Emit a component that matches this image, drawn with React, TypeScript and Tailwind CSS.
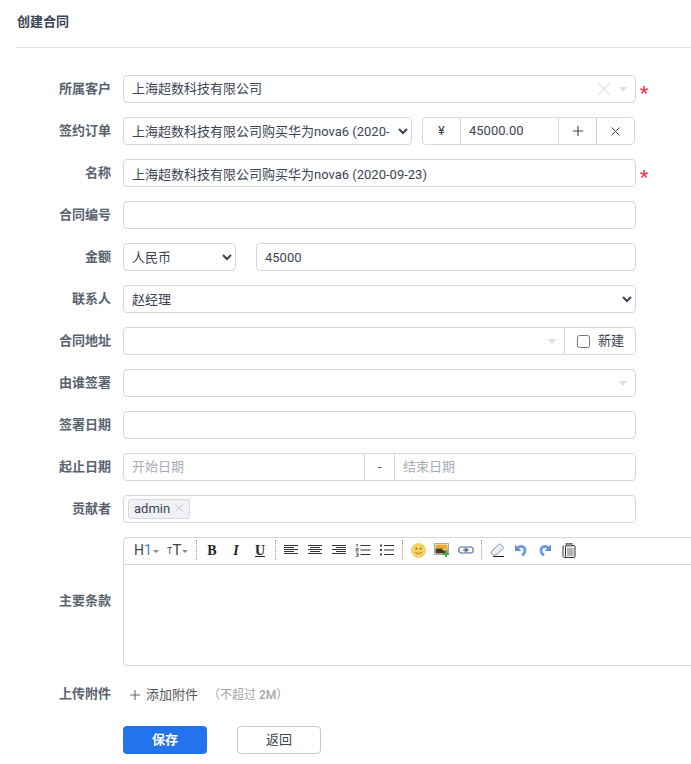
import React from 'react';

const inputCls =
  'h-7 border border-[#d5d8e3] rounded-[4px] bg-white px-2 text-[13px] text-[#3c4353] outline-none';

const Row = ({ label, children, star }: { label: string; children?: React.ReactNode; star?: boolean }) => (
  <div className="flex items-center h-7 mb-[14px]">
    <label className="w-[111px] shrink-0 text-right text-[13px] font-bold text-[#5a6270] leading-none -mt-[2px]">{label}</label>
    <div className="w-[513px] ml-3 shrink-0 flex h-7">{children}</div>
    {star && <span className="ml-1 text-[#f5365c] text-[18px] font-bold leading-none mt-[7px]">*</span>}
  </div>
);

const Caret = () => <span className="w-0 h-0 border-x-[4px] border-x-transparent border-t-[5px] border-t-[#dcdfe6]" />;

const Btn = ({ children }: { children: React.ReactNode }) => (
  <span className="w-6 h-[20px] shrink-0 flex items-center justify-center">{children}</span>
);
const Sep = () => (
  <span className="w-[7px] h-[20px] shrink-0 flex justify-center">
    <span className="h-full border-l border-dotted border-[#999]" />
  </span>
);
const Tiny = () => <span className="w-0 h-0 ml-[1px] mt-[2px] border-x-[3px] border-x-transparent border-t-[3px] border-t-[#888]" />;

const Lines = ({ xs }: { xs: [number, number][] }) => (
  <svg width="14" height="12" viewBox="0 0 14 12" shapeRendering="crispEdges">
    {xs.map(([a, b], i) => (
      <rect key={i} x={a} y={1 + i * 2} width={b - a} height="1" fill="#333" />
    ))}
  </svg>
);

const NumList = () => (
  <svg width="16" height="14" viewBox="0 0 16 14">
    <path d="M5.5 2.5h10M5.5 7h10M5.5 11.5h10" stroke="#333" />
    <path d="M1 2.2 2.2 1v3M.8 5.6h2.4v1.2H1v1.2h2.4M.8 10h2.4v3.4H.8M1.5 11.6h1.6" stroke="#444" strokeWidth=".8" fill="none" />
  </svg>
);
const BulList = () => (
  <svg width="16" height="14" viewBox="0 0 16 14">
    <path d="M5 2.5h10M5 7h10M5 11.5h10" stroke="#333" />
    <rect x="1" y="1.5" width="2" height="2" fill="#444" />
    <rect x="1" y="6" width="2" height="2" fill="#444" />
    <rect x="1" y="10.5" width="2" height="2" fill="#444" />
  </svg>
);
const Smile = () => (
  <svg width="15" height="15" viewBox="0 0 15 15">
    <circle cx="7.5" cy="7.5" r="7" fill="#f7d35e" stroke="#e8bf6a" strokeWidth=".8" />
    <circle cx="5.3" cy="5.6" r=".9" fill="#7a5a10" />
    <circle cx="9.7" cy="5.6" r=".9" fill="#7a5a10" />
    <path d="M4 8.8c1.6 2.2 5.4 2.2 7 0" stroke="#8a6414" strokeWidth=".9" fill="none" />
  </svg>
);
const Pic = () => (
  <svg width="16" height="15" viewBox="0 0 16 15">
    <rect x=".5" y=".5" width="14" height="11" fill="#fff" stroke="#aaa" />
    <rect x="1.5" y="1.5" width="12" height="4" fill="#f0a92e" />
    <rect x="1.5" y="5.5" width="12" height="5" fill="#4a3a1e" />
    <path d="M8 5.5h5.5v2H9z" fill="#f7d35e" />
    <path d="M12 8v6M9 11h6" stroke="#3fae49" strokeWidth="2" />
  </svg>
);
const LinkIcon = () => (
  <svg width="16" height="10" viewBox="0 0 16 10" fill="none">
    <rect x=".8" y="2" width="8" height="6" rx="3" stroke="#8496b8" strokeWidth="1.6" />
    <rect x="7.2" y="2" width="8" height="6" rx="3" stroke="#8496b8" strokeWidth="1.6" />
    <path d="M5 5h6" stroke="#555" />
  </svg>
);
const Eraser = () => (
  <svg width="15" height="14" viewBox="0 0 15 14">
    <path d="M1 9 8.5 1.5c.6-.6 1.4-.6 2 0l2.5 2.2c.6.6.6 1.3 0 2L6 12H3.5L1 10z" fill="#e9eef5" stroke="#7d8794" strokeWidth=".9" />
    <path d="M3 13.5h11" stroke="#222" />
  </svg>
);
const Undo = ({ flip }: { flip?: boolean }) => (
  <svg width="14" height="14" viewBox="0 0 14 14" fill="none" className={flip ? '-scale-x-100' : ''}>
    <path d="M3.5 5C6 2.6 11 3 11 7.5c0 2.2-1.3 3.7-3 4.8" stroke="#6f9bdc" strokeWidth="2.8" />
    <path d="M1 1.5V8h6.5z" fill="#5f8fd6" />
  </svg>
);
const Paste = () => (
  <svg width="14" height="15" viewBox="0 0 14 15" fill="none">
    <path d="M2 3.5 1 3v10.5l1 1h8" stroke="#333" />
    <rect x="3.5" y="2.5" width="9.5" height="12" rx="1" fill="#f2f2f2" stroke="#333" />
    <rect x="4" y=".6" width="6" height="2.4" fill="#999" stroke="#333" strokeWidth=".6" />
    <path d="M5 6h6.5M5 8h6.5M5 10h6.5M5 12h6.5" stroke="#555" strokeWidth=".8" />
  </svg>
);

export default function App() {
  const orderName = '上海超数科技有限公司购买华为nova6 (2020-09-23)';
  return (
    <div
      className="w-[691px] h-[764px] overflow-hidden bg-white text-[#3c4353] text-[13px]"
      style={{ fontFamily: 'Roboto, "Noto Sans CJK SC", sans-serif' }}
    >
      <div className="ml-[17px] h-[48px] border-b border-[#dcdde5] flex items-start">
        <h2 className="text-[13px] font-bold leading-[18px] mt-[13px] text-[#3c4353]">创建合同</h2>
      </div>

      <div className="pt-[27px]">
        <Row label="所属客户" star>
          <div className={`${inputCls} w-full flex items-center`}>
            <span className="flex-1">上海超数科技有限公司</span>
            <svg width="12" height="12" viewBox="0 0 12 12" className="mr-[9px]">
              <path d="M.5.5l11 11M11.5.5l-11 11" stroke="#e3e4e8" strokeWidth="1.2" />
            </svg>
            <Caret />
          </div>
        </Row>

        <Row label="签约订单">
          <select className={`${inputCls} w-[289px] !pl-1 !pr-[6px] shrink-0`} defaultValue={orderName}>
            <option>{orderName}</option>
          </select>
          <div className="ml-[10px] w-[213px] flex h-7 border border-[#d5d8e3] rounded-[4px] shrink-0">
            <span className="w-[38px] flex items-center justify-center border-r border-[#d5d8e3]">¥</span>
            <span className="w-[97px] flex items-center pl-[8px]">45000.00</span>
            <span className="w-[38px] flex items-center justify-center border-l border-[#d5d8e3]">
              <svg width="10" height="10" viewBox="0 0 10 10"><path d="M5 0v10M0 5h10" stroke="#444" strokeWidth="1.1" /></svg>
            </span>
            <span className="flex-1 flex items-center justify-center border-l border-[#c8cad2]">
              <svg width="9" height="9" viewBox="0 0 9 9"><path d="M.5.5l8 8M8.5.5l-8 8" stroke="#444" strokeWidth="1" /></svg>
            </span>
          </div>
        </Row>

        <Row label="名称" star>
          <input className={`${inputCls} w-full`} defaultValue={orderName} />
        </Row>

        <Row label="合同编号">
          <input className={`${inputCls} w-full`} />
        </Row>

        <Row label="金额">
          <select className={`${inputCls} w-[113px] !px-1 shrink-0`}>
            <option>人民币</option>
          </select>
          <input className={`${inputCls} ml-5 w-[380px]`} defaultValue="45000" />
        </Row>

        <Row label="联系人">
          <select className={`${inputCls} w-full !px-1`}>
            <option>赵经理</option>
          </select>
        </Row>

        <Row label="合同地址">
          <div className="w-full flex h-7 border border-[#d5d8e3] rounded-[4px]">
            <div className="flex-1 flex items-center justify-end pr-2"><Caret /></div>
            <div className="w-[71px] border-l border-[#d5d8e3] flex items-center pl-3">
              <input type="checkbox" className="w-[13px] h-[13px] mr-2" />
              <span>新建</span>
            </div>
          </div>
        </Row>

        <Row label="由谁签署">
          <div className={`${inputCls} w-full flex items-center justify-end`}><Caret /></div>
        </Row>

        <Row label="签署日期">
          <input className={`${inputCls} w-full`} />
        </Row>

        <Row label="起止日期">
          <div className="w-full flex h-7 border border-[#d5d8e3] rounded-[4px] text-[#a6abb5]">
            <span className="w-[240px] flex items-center pl-2">开始日期</span>
            <span className="w-[31px] flex items-center justify-center border-x border-[#d5d8e3] text-[#3c4353]">-</span>
            <span className="flex-1 flex items-center pl-2">结束日期</span>
          </div>
        </Row>

        <Row label="贡献者">
          <div className="w-full h-7 border border-[#d5d8e3] rounded-[4px] flex items-center pl-[4px]">
            <span className="h-5 w-[62px] bg-[#f0f1f3] border border-[#d5d8e3] rounded-[3px] flex items-center pl-[5px] text-[13px]">
              admin
              <svg width="8" height="8" viewBox="0 0 8 8" className="ml-[5px] -mt-[3px]"><path d="M.5.5l7 7M7.5.5l-7 7" stroke="#c4c6cc" /></svg>
            </span>
          </div>
        </Row>

        {/* editor runs past the right edge of the window */}
        <div className="flex items-center mb-[15px]">
          <label className="w-[111px] shrink-0 text-right text-[13px] font-bold text-[#5a6270] -mt-[2px]">主要条款</label>
          <div className="ml-3 w-[620px] shrink-0 h-[129px] border border-[#d5d8e3] rounded-[4px]">
            <div className="h-[27px] pb-[2px] border-b border-[#d5d8e3] flex items-center text-[#444]">
              <span className="w-[38px] pl-[10px] flex items-center shrink-0 text-[14px] leading-none">
                H<span className="text-[#3f7fe0]">1</span><Tiny />
              </span>
              <span className="w-[31px] pl-[5px] flex items-center shrink-0 text-[15px] leading-none">
                <span className="text-[9px] mt-[3px]">T</span>T<Tiny />
              </span>
              <Sep />
              <Btn><span className="font-bold text-[14px] text-[#222]" style={{ fontFamily: '"Liberation Serif", serif' }}>B</span></Btn>
              <Btn><span className="font-bold italic text-[14px] text-[#222]" style={{ fontFamily: '"Liberation Serif", serif' }}>I</span></Btn>
              <Btn><span className="font-bold underline text-[14px] text-[#222]" style={{ fontFamily: '"Liberation Serif", serif' }}>U</span></Btn>
              <Sep />
              <Btn><Lines xs={[[0, 14], [0, 10], [0, 14], [0, 10], [0, 14]]} /></Btn>
              <Btn><Lines xs={[[0, 14], [2, 12], [0, 14], [2, 12], [0, 14]]} /></Btn>
              <Btn><Lines xs={[[0, 14], [4, 14], [0, 14], [4, 14], [0, 14]]} /></Btn>
              <Btn><NumList /></Btn>
              <Btn><BulList /></Btn>
              <Sep />
              <Btn><Smile /></Btn>
              <Btn><Pic /></Btn>
              <Btn><LinkIcon /></Btn>
              <Sep />
              <Btn><Eraser /></Btn>
              <Btn><Undo /></Btn>
              <Btn><Undo flip /></Btn>
              <Btn><Paste /></Btn>
            </div>
          </div>
        </div>

        <div className="flex items-center h-7">
          <label className="w-[111px] shrink-0 text-right text-[13px] font-bold text-[#5a6270] -mt-[2px]">上传附件</label>
          <div className="ml-[19px] flex items-center">
            <svg width="10" height="10" viewBox="0 0 10 10" className="mr-[6px]"><path d="M5 0v10M0 5h10" stroke="#666" strokeWidth="1.1" /></svg>
            <span className="text-[#555]">添加附件</span>
            <span className="ml-[10px] text-[12px] text-[#a6a6a6]">（不超过 <span className="font-medium">2M</span>）</span>
          </div>
        </div>

        <div className="flex mt-[17px] ml-[123px]">
          <button className="w-[84px] h-7 rounded-[4px] bg-[#2273ec] text-white font-bold text-[13px]">保存</button>
          <button className="ml-[30px] w-[84px] h-7 rounded-[4px] border border-[#c4c6cc] text-[13px] text-[#3c4353]">返回</button>
        </div>
      </div>
    </div>
  );
}
